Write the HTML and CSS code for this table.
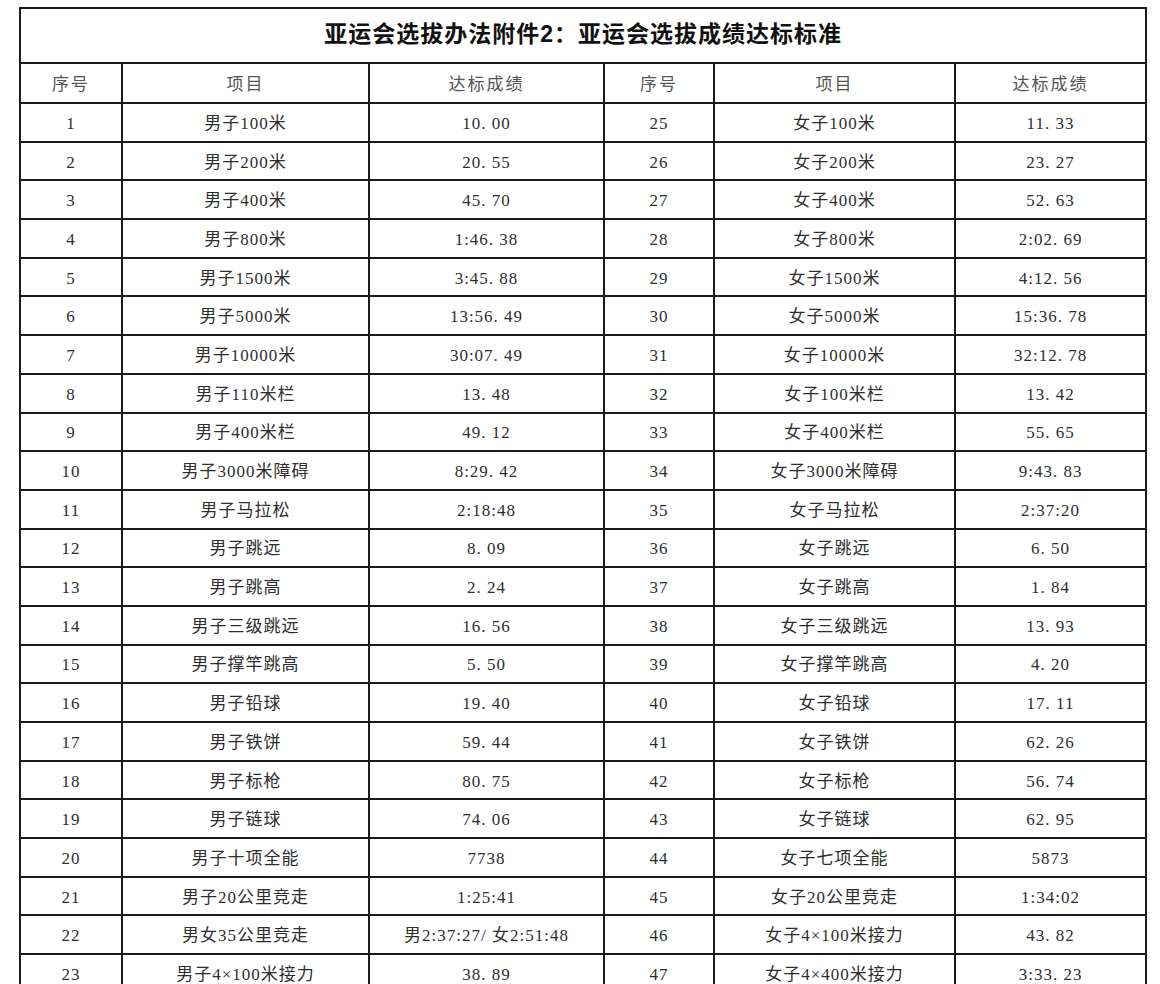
FILE: index.html
```html
<!DOCTYPE html>
<html lang="zh-CN">
<head>
<meta charset="utf-8">
<title>亚运会选拔成绩达标标准</title>
<link rel="stylesheet" href="styles.css">
</head>
<body>
<table class="std">
  <colgroup>
    <col class="c-no"><col class="c-item"><col class="c-res"><col class="c-no2"><col class="c-item2"><col class="c-res2">
  </colgroup>
  <thead>
    <tr class="title-row"><th colspan="6" class="title">亚运会选拔办法附件2：亚运会选拔成绩达标标准</th></tr>
    <tr class="head-row"><th>序号</th><th>项目</th><th>达标成绩</th><th>序号</th><th>项目</th><th>达标成绩</th></tr>
  </thead>
  <tbody>
    <tr><td>1</td><td>男子100米</td><td>10. 00</td><td>25</td><td>女子100米</td><td>11. 33</td></tr>
    <tr><td>2</td><td>男子200米</td><td>20. 55</td><td>26</td><td>女子200米</td><td>23. 27</td></tr>
    <tr><td>3</td><td>男子400米</td><td>45. 70</td><td>27</td><td>女子400米</td><td>52. 63</td></tr>
    <tr><td>4</td><td>男子800米</td><td>1:46. 38</td><td>28</td><td>女子800米</td><td>2:02. 69</td></tr>
    <tr><td>5</td><td>男子1500米</td><td>3:45. 88</td><td>29</td><td>女子1500米</td><td>4:12. 56</td></tr>
    <tr><td>6</td><td>男子5000米</td><td>13:56. 49</td><td>30</td><td>女子5000米</td><td>15:36. 78</td></tr>
    <tr><td>7</td><td>男子10000米</td><td>30:07. 49</td><td>31</td><td>女子10000米</td><td>32:12. 78</td></tr>
    <tr><td>8</td><td>男子110米栏</td><td>13. 48</td><td>32</td><td>女子100米栏</td><td>13. 42</td></tr>
    <tr><td>9</td><td>男子400米栏</td><td>49. 12</td><td>33</td><td>女子400米栏</td><td>55. 65</td></tr>
    <tr><td>10</td><td>男子3000米障碍</td><td>8:29. 42</td><td>34</td><td>女子3000米障碍</td><td>9:43. 83</td></tr>
    <tr><td>11</td><td>男子马拉松</td><td>2:18:48</td><td>35</td><td>女子马拉松</td><td>2:37:20</td></tr>
    <tr><td>12</td><td>男子跳远</td><td>8. 09</td><td>36</td><td>女子跳远</td><td>6. 50</td></tr>
    <tr><td>13</td><td>男子跳高</td><td>2. 24</td><td>37</td><td>女子跳高</td><td>1. 84</td></tr>
    <tr><td>14</td><td>男子三级跳远</td><td>16. 56</td><td>38</td><td>女子三级跳远</td><td>13. 93</td></tr>
    <tr><td>15</td><td>男子撑竿跳高</td><td>5. 50</td><td>39</td><td>女子撑竿跳高</td><td>4. 20</td></tr>
    <tr><td>16</td><td>男子铅球</td><td>19. 40</td><td>40</td><td>女子铅球</td><td>17. 11</td></tr>
    <tr><td>17</td><td>男子铁饼</td><td>59. 44</td><td>41</td><td>女子铁饼</td><td>62. 26</td></tr>
    <tr><td>18</td><td>男子标枪</td><td>80. 75</td><td>42</td><td>女子标枪</td><td>56. 74</td></tr>
    <tr><td>19</td><td>男子链球</td><td>74. 06</td><td>43</td><td>女子链球</td><td>62. 95</td></tr>
    <tr><td>20</td><td>男子十项全能</td><td>7738</td><td>44</td><td>女子七项全能</td><td>5873</td></tr>
    <tr><td>21</td><td>男子20公里竞走</td><td>1:25:41</td><td>45</td><td>女子20公里竞走</td><td>1:34:02</td></tr>
    <tr><td>22</td><td>男女35公里竞走</td><td>男2:37:27/ 女2:51:48</td><td>46</td><td>女子4×100米接力</td><td>43. 82</td></tr>
    <tr><td>23</td><td>男子4×100米接力</td><td>38. 89</td><td>47</td><td>女子4×400米接力</td><td>3:33. 23</td></tr>
  </tbody>
</table>
</body>
</html>
```
FILE: styles.css
```css
html, body {
  margin: 0;
  padding: 0;
  background: #ffffff;
}
body {
  padding: 7px 0 0 19px;
  font-family: "Liberation Serif", "Noto Sans CJK SC", serif;
  color: #2e2e2e;
}
.std {
  border-collapse: collapse;
  width: 1126px;
  table-layout: fixed;
}
.c-no { width: 102px; }
.c-item { width: 247px; }
.c-res { width: 235px; }
.c-no2 { width: 110px; }
.c-item2 { width: 241px; }
.c-res2 { width: 191px; }
.std th, .std td {
  border: 2px solid #1a1a1a;
  text-align: center;
  vertical-align: middle;
  padding: 0;
  font-size: 17px;
  line-height: 20px;
  font-weight: normal;
  letter-spacing: 1px;
  white-space: nowrap;
}
.std td {
  padding-top: 3px;
}
.std tbody tr {
  height: 38.7px;
}
.title-row {
  height: 55px;
}
.std th.title {
  font-family: "Liberation Sans", "Noto Sans CJK SC", sans-serif;
  font-size: 23px;
  line-height: 28px;
  font-weight: bold;
  color: #111;
  letter-spacing: 1px;
  padding-bottom: 3px;
}
.head-row {
  height: 40px;
}
.head-row th {
  color: #555;
  font-size: 17px;
  letter-spacing: 2px;
  padding-top: 3px;
}
```
